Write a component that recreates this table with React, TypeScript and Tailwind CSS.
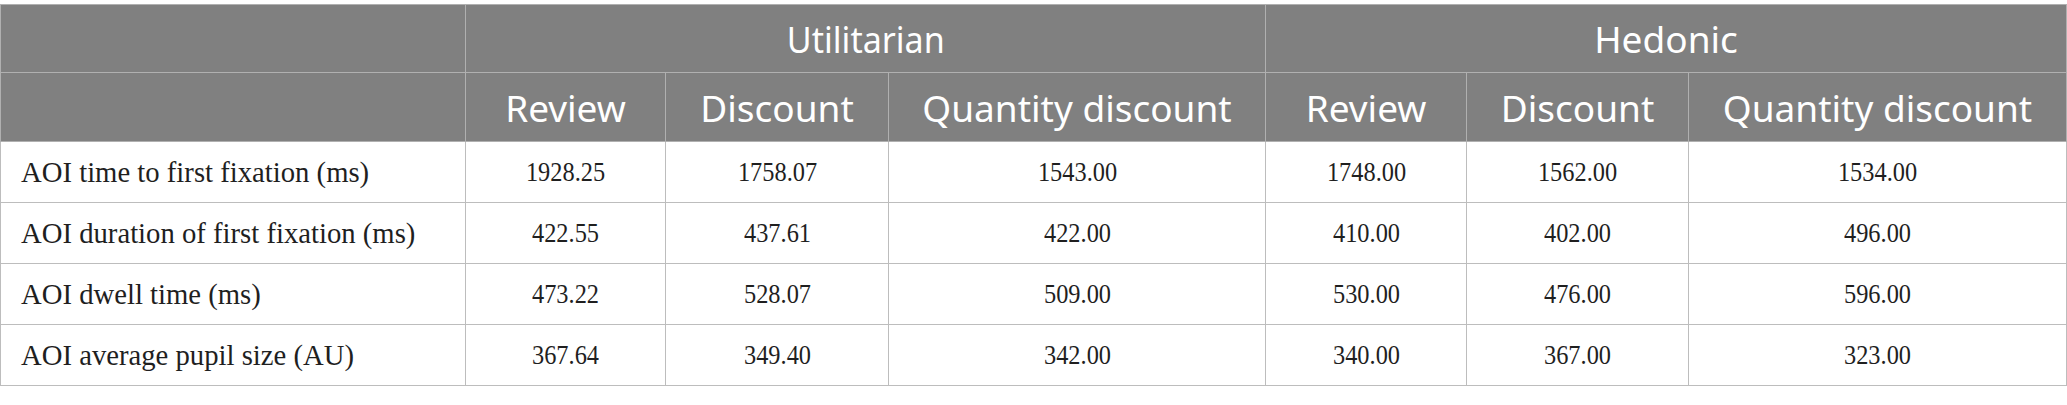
import React from "react";

const rows: [string, string[]][] = [
  ["AOI time to first fixation (ms)", ["1928.25", "1758.07", "1543.00", "1748.00", "1562.00", "1534.00"]],
  ["AOI duration of first fixation (ms)", ["422.55", "437.61", "422.00", "410.00", "402.00", "496.00"]],
  ["AOI dwell time (ms)", ["473.22", "528.07", "509.00", "530.00", "476.00", "596.00"]],
  ["AOI average pupil size (AU)", ["367.64", "349.40", "342.00", "340.00", "367.00", "323.00"]],
];

const sub = ["Review", "Discount", "Quantity discount", "Review", "Discount", "Quantity discount"];

export default function App() {
  return (
    <div className="w-[2067px] h-[405px] bg-white pt-[4px]">
      <table className="table-fixed border-collapse w-[2066px]">
        <colgroup>
          <col className="w-[465px]" />
          <col className="w-[200px]" />
          <col className="w-[223px]" />
          <col className="w-[377px]" />
          <col className="w-[201px]" />
          <col className="w-[222px]" />
          <col className="w-[378px]" />
        </colgroup>
        <thead className="bg-[#808080] text-white font-['Noto_Sans',sans-serif] text-[37px] font-normal leading-none">
          <tr className="h-[68px]">
            <th className="border border-[#b0b0b0] font-normal"></th>
            <th colSpan={3} className="border border-[#b0b0b0] font-normal text-center">
              <span className="inline-block scale-x-[0.92]">Utilitarian</span>
            </th>
            <th colSpan={3} className="border border-[#b0b0b0] font-normal text-center">Hedonic</th>
          </tr>
          <tr className="h-[69px]">
            <th className="border border-[#b0b0b0] font-normal"></th>
            {sub.map((s, i) => (
              <th key={i} className="border border-[#b0b0b0] font-normal text-center">{s}</th>
            ))}
          </tr>
        </thead>
        <tbody className="font-['Liberation_Serif',serif] text-[28px] leading-none text-[#1f1f1f]">
          {rows.map(([label, vals], r) => (
            <tr key={r} className="h-[61px]">
              <td className="border border-[#bdbdbd] pl-[20px] text-left text-[28.7px]">{label}</td>
              {vals.map((v, i) => (
                <td key={i} className="border border-[#bdbdbd] text-center">
                  <span className="inline-block scale-x-[0.87]">{v}</span>
                </td>
              ))}
            </tr>
          ))}
        </tbody>
      </table>
    </div>
  );
}
